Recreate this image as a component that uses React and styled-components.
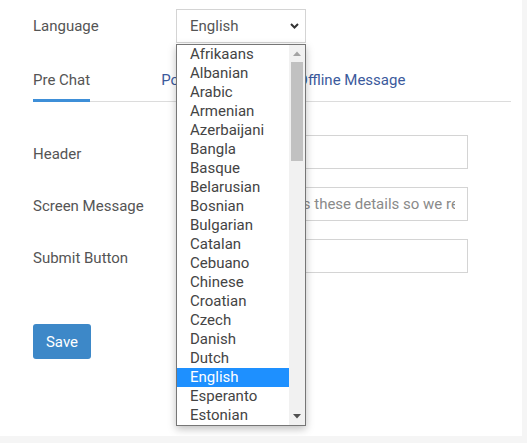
import React from 'react';
import styled, { createGlobalStyle } from 'styled-components';

const GlobalStyle = createGlobalStyle`
  html, body {
    margin: 0;
    padding: 0;
    background: #f5f5f5;
  }
  body {
    font-family: Roboto, "Liberation Sans", sans-serif;
    font-size: 15px;
    color: #555;
  }
`;

const languages = [
  'Afrikaans', 'Albanian', 'Arabic', 'Armenian', 'Azerbaijani', 'Bangla', 'Basque',
  'Belarusian', 'Bosnian', 'Bulgarian', 'Catalan', 'Cebuano', 'Chinese', 'Croatian',
  'Czech', 'Danish', 'Dutch', 'English', 'Esperanto', 'Estonian',
];

const tabs = ['Pre Chat', 'Post Chat', 'Offline Message'];

const Panel = styled.div`
  width: 522px;
  height: 436px;
  box-sizing: border-box;
  background: #fff;
  padding: 9px 0 0 33px;
`;

const Row = styled.div`
  display: grid;
  grid-template-columns: 143px ${p => p.$field || 292}px;
  align-items: center;
  height: 34px;
`;

const Label = styled.label`
  color: #555;
  font-size: 15px;
  line-height: 20px;
  padding-top: ${p => p.$drop || 0}px;
`;

const SelectWrap = styled.div`
  position: relative;
  height: 34px;
`;

const SelectBox = styled.div`
  box-sizing: border-box;
  height: 34px;
  border: 1px solid #d4d4d4;
  display: flex;
  align-items: center;
  justify-content: space-between;
  padding: 0 6px 0 13px;
  color: #555;
  background: #fff;
`;

const Chevron = () => (
  <svg width="9" height="6" viewBox="0 0 9 6">
    <path d="M1 1l3.5 3.5L8 1" fill="none" stroke="#333" strokeWidth="2" />
  </svg>
);

const Dropdown = styled.div`
  position: absolute;
  top: 35px;
  left: 0;
  width: 130px;
  height: 382px;
  box-sizing: border-box;
  border: 1px solid #767676;
  background: #fff;
  box-shadow: 0 3px 8px rgba(0, 0, 0, 0.25);
  display: grid;
  grid-template-columns: 112px 16px;
  z-index: 2;
`;

const OptionList = styled.ul`
  list-style: none;
  margin: 0;
  padding: 0;
  overflow: hidden;
`;

const Option = styled.li`
  height: 19px;
  line-height: 19px;
  padding-left: 13px;
  font-size: 15px;
  white-space: nowrap;
  color: ${p => (p.$selected ? '#fff' : '#444')};
  background: ${p => (p.$selected ? '#1e90ff' : 'transparent')};
`;

const ScrollTrack = styled.div`
  background: #f1f1f1;
  display: flex;
  flex-direction: column;
  align-items: center;
`;

const ScrollButton = styled.div`
  height: 17px;
  width: 16px;
  display: flex;
  align-items: center;
  justify-content: center;
  margin-top: ${p => (p.$end ? 'auto' : '0')};
`;

const ScrollThumb = styled.div`
  width: 12px;
  height: 99px;
  background: #c1c1c1;
`;

const Arrow = ({ up, color }) => (
  <svg width="8" height="5" viewBox="0 0 8 5">
    <path d={up ? 'M0 5L4 0.5L8 5Z' : 'M0 0L4 4.5L8 0Z'} fill={color} />
  </svg>
);

const TabBar = styled.div`
  display: flex;
  width: 478px;
  margin-top: 27px;
  border-bottom: 1px solid #dcdcdc;
`;

const Tab = styled.div`
  line-height: 20px;
  padding-bottom: 9px;
  margin-right: 71px;
  margin-bottom: -1px;
  border-bottom: 3px solid ${p => (p.$active ? '#3e8fd8' : 'transparent')};
  color: ${p => (p.$active ? '#555' : '#3b5a9c')};
  cursor: pointer;
`;

const Form = styled.div`
  display: flex;
  flex-direction: column;
  gap: 18px;
  margin-top: 33px;
`;

const Input = styled.input`
  box-sizing: border-box;
  height: 34px;
  width: 292px;
  border: 1px solid #d4d4d4;
  padding: 0 12px 0 16px;
  font-family: Roboto, "Liberation Sans", sans-serif;
  font-size: 15px;
  color: #555;
  outline: none;
  &::placeholder {
    color: #8a8a8a;
  }
`;

const SaveButton = styled.button`
  margin-top: 51px;
  width: 58px;
  height: 35px;
  border: none;
  border-radius: 3px;
  background: #3d88c8;
  color: #fff;
  font-family: Roboto, "Liberation Sans", sans-serif;
  font-size: 15px;
  cursor: pointer;
`;

const App = () => {
  const selected = 'English';
  return (
    <>
      <GlobalStyle />
      <Panel>
        <Row $field={130}>
          <Label>Language</Label>
          <SelectWrap>
            <SelectBox>
              <span>{selected}</span>
              <Chevron />
            </SelectBox>
            <Dropdown>
              <OptionList>
                {languages.map(l => (
                  <Option key={l} $selected={l === selected}>{l}</Option>
                ))}
              </OptionList>
              <ScrollTrack>
                <ScrollButton><Arrow up color="#a3a3a3" /></ScrollButton>
                <ScrollThumb />
                <ScrollButton $end><Arrow color="#505050" /></ScrollButton>
              </ScrollTrack>
            </Dropdown>
          </SelectWrap>
        </Row>

        <TabBar>
          {tabs.map((t, i) => (
            <Tab key={t} $active={i === 0}>{t}</Tab>
          ))}
        </TabBar>

        <Form>
          <Row>
            <Label $drop={4}>Header</Label>
            <Input type="text" />
          </Row>
          <Row>
            <Label $drop={4}>Screen Message</Label>
            <Input type="text" placeholder="Please provide us these details so we reach you" />
          </Row>
          <Row>
            <Label $drop={4}>Submit Button</Label>
            <Input type="text" />
          </Row>
        </Form>

        <SaveButton>Save</SaveButton>
      </Panel>
    </>
  );
};

export default App;
